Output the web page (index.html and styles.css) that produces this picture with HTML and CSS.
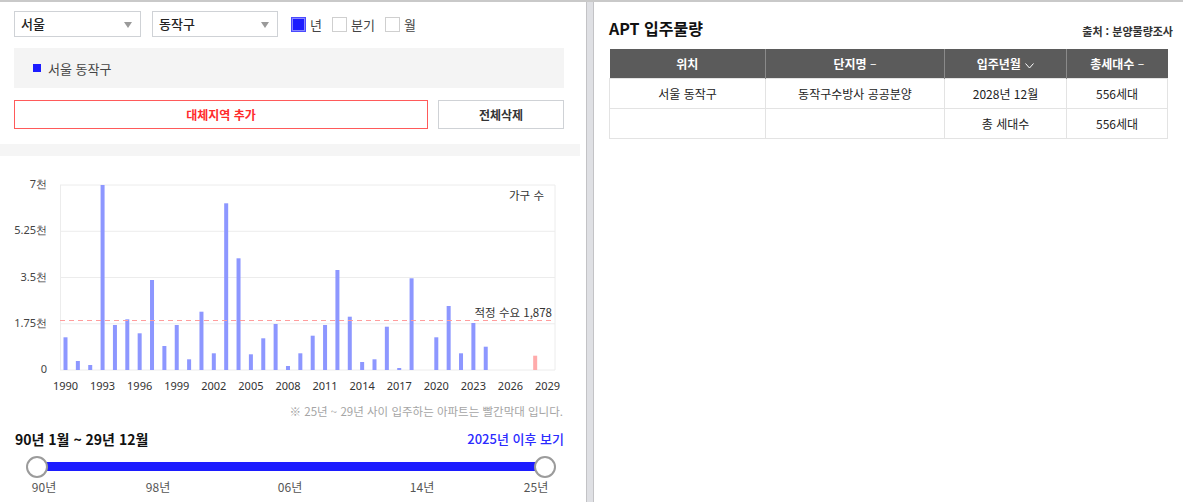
FILE: index.html
```html
<!DOCTYPE html>
<html lang="ko">
<head>
    <meta charset="UTF-8">
    <meta name="viewport" content="width=device-width, initial-scale=1.0">
    <title>APT 입주물량</title>
    <link rel="stylesheet" href="styles.css">
</head>
<body>
    <div class="page">
        <div class="left">
            <div class="filters">
                <div class="filter-row">
                    <div class="select">서울<span class="arrow"></span></div>
                    <div class="select">동작구<span class="arrow"></span></div>
                    <div class="checks">
                        <label class="check"><span class="box on"></span>년</label>
                        <label class="check"><span class="box"></span>분기</label>
                        <label class="check"><span class="box"></span>월</label>
                    </div>
                </div>
                <div class="region-box">
                    <span class="dot"></span>서울 동작구
                </div>
                <div class="buttons">
                    <button class="btn btn-add">대체지역 추가</button>
                    <button class="btn btn-clear">전체삭제</button>
                </div>
            </div>
            <div class="divider"></div>

            <svg class="chart" width="580" height="244" viewBox="0 0 580 244">
                <g class="grid">
                    <line x1="60" y1="29" x2="555" y2="29"/>
                    <line x1="60" y1="75.25" x2="555" y2="75.25"/>
                    <line x1="60" y1="121.5" x2="555" y2="121.5"/>
                    <line x1="60" y1="167.75" x2="555" y2="167.75"/>
                    <line x1="60" y1="214" x2="555" y2="214"/>
                    <line x1="60.5" y1="29" x2="60.5" y2="214"/>
                    <line x1="555" y1="29" x2="555" y2="214"/>
                </g>
                <g class="ylabels">
                    <text x="47" y="32">7천</text>
                    <text x="47" y="78">5.25천</text>
                    <text x="47" y="125">3.5천</text>
                    <text x="47" y="171">1.75천</text>
                    <text x="47" y="217">0</text>
                </g>
                <g class="bars">
                    <rect x="63.5" y="181.3" width="4" height="32.7"/>
                    <rect x="75.86" y="205" width="4" height="9"/>
                    <rect x="88.22" y="209" width="4" height="5"/>
                    <rect x="100.58" y="29" width="4" height="185"/>
                    <rect x="112.94" y="169" width="4" height="45"/>
                    <rect x="125.3" y="163.3" width="4" height="50.7"/>
                    <rect x="137.66" y="177.3" width="4" height="36.7"/>
                    <rect x="150.02" y="124" width="4" height="90"/>
                    <rect x="162.38" y="190" width="4" height="24"/>
                    <rect x="174.74" y="169" width="4" height="45"/>
                    <rect x="187.1" y="203.3" width="4" height="10.7"/>
                    <rect x="199.46" y="155.7" width="4" height="58.3"/>
                    <rect x="211.82" y="197.3" width="4" height="16.7"/>
                    <rect x="224.18" y="47.3" width="4" height="166.7"/>
                    <rect x="236.54" y="102.3" width="4" height="111.7"/>
                    <rect x="248.9" y="198.3" width="4" height="15.7"/>
                    <rect x="261.26" y="182.3" width="4" height="31.7"/>
                    <rect x="273.62" y="168" width="4" height="46"/>
                    <rect x="285.98" y="210" width="4" height="4"/>
                    <rect x="298.34" y="197.3" width="4" height="16.7"/>
                    <rect x="310.7" y="179.7" width="4" height="34.3"/>
                    <rect x="323.06" y="169" width="4" height="45"/>
                    <rect x="335.42" y="114" width="4" height="100"/>
                    <rect x="347.78" y="160.7" width="4" height="53.3"/>
                    <rect x="360.14" y="206" width="4" height="8"/>
                    <rect x="372.5" y="203.3" width="4" height="10.7"/>
                    <rect x="384.86" y="170.7" width="4" height="43.3"/>
                    <rect x="397.22" y="212" width="4" height="2"/>
                    <rect x="409.58" y="122.3" width="4" height="91.7"/>
                    <rect x="434.3" y="181.3" width="4" height="32.7"/>
                    <rect x="446.66" y="150" width="4" height="64"/>
                    <rect x="459.02" y="197.3" width="4" height="16.7"/>
                    <rect x="471.38" y="167" width="4" height="47"/>
                    <rect x="483.74" y="190.7" width="4" height="23.3"/>
                    <rect class="future" x="533.18" y="199.7" width="4" height="14.3"/>
                </g>
                <line class="demand" x1="60" y1="164.5" x2="555" y2="164.5"/>
                <text class="demand-label" x="552" y="160.5">적정 수요 1,878</text>
                <text class="unit" x="544" y="44">가구 수</text>
                <g class="xlabels">
                    <text x="65.5" y="234">1990</text>
                    <text x="102.58" y="234">1993</text>
                    <text x="139.66" y="234">1996</text>
                    <text x="176.74" y="234">1999</text>
                    <text x="213.82" y="234">2002</text>
                    <text x="250.9" y="234">2005</text>
                    <text x="287.98" y="234">2008</text>
                    <text x="325.06" y="234">2011</text>
                    <text x="362.14" y="234">2014</text>
                    <text x="399.22" y="234">2017</text>
                    <text x="436.3" y="234">2020</text>
                    <text x="473.38" y="234">2023</text>
                    <text x="510.46" y="234">2026</text>
                    <text x="547.54" y="234">2029</text>
                </g>
            </svg>

            <p class="note">※ 25년 ~ 29년 사이 입주하는 아파트는 빨간막대 입니다.</p>
            <div class="range-head">
                <strong>90년 1월 ~ 29년 12월</strong>
                <a class="after-link">2025년 이후 보기</a>
            </div>
            <div class="slider">
                <div class="track"></div>
                <span class="handle handle-left"></span>
                <span class="handle handle-right"></span>
            </div>
            <div class="slider-labels">
                <span style="left: 44px">90년</span>
                <span style="left: 158px">98년</span>
                <span style="left: 290px">06년</span>
                <span style="left: 422px">14년</span>
                <span style="left: 536px">25년</span>
            </div>
        </div>

        <div class="right">
            <div class="right-head">
                <h2 class="title">APT 입주물량</h2>
                <span class="source">출처 : 분양물량조사</span>
            </div>
            <table class="supply">
                <colgroup>
                    <col style="width: 156px">
                    <col style="width: 179px">
                    <col style="width: 122px">
                    <col style="width: 101px">
                </colgroup>
                <thead>
                    <tr>
                        <th>위치</th>
                        <th>단지명 <span class="sort">–</span></th>
                        <th>입주년월 <svg class="chev" width="9" height="6" viewBox="0 0 9 6"><path d="M0.5 0.5 L4.5 5 L8.5 0.5" fill="none" stroke="#fff" stroke-width="1"/></svg></th>
                        <th>총세대수 <span class="sort">–</span></th>
                    </tr>
                </thead>
                <tbody>
                    <tr>
                        <td>서울 동작구</td>
                        <td>동작구수방사 공공분양</td>
                        <td>2028년 12월</td>
                        <td>556세대</td>
                    </tr>
                    <tr>
                        <td></td>
                        <td></td>
                        <td>총 세대수</td>
                        <td>556세대</td>
                    </tr>
                </tbody>
            </table>
        </div>
    </div>
</body>
</html>
```

FILE: styles.css
```css
body {
    margin: 0;
    font-family: "Noto Sans CJK KR", "Noto Sans", sans-serif;
    color: #333;
    background: #dfe0e4;
}
.page {
    display: flex;
    height: 500px;
    border-top: 2px solid #c9c9c9;
}
.left {
    width: 580px;
    padding-right: 6px;
    background: #fff;
    border-right: 1px solid #c3c3c6;
}
.filters {
    padding: 9px 16px 15px 14px;
}
.filter-row {
    display: flex;
    align-items: center;
    height: 26px;
}
.select {
    position: relative;
    box-sizing: border-box;
    width: 127px;
    height: 26px;
    margin-right: 11px;
    padding-left: 6px;
    border: 1px solid #cfd2d6;
    font-size: 13px;
    font-weight: 500;
    line-height: 24px;
    color: #222;
}
.select + .select {
    width: 126px;
}
.arrow {
    position: absolute;
    right: 8px;
    top: 10px;
    width: 0;
    height: 0;
    border-left: 4px solid transparent;
    border-right: 4px solid transparent;
    border-top: 6px solid #9a9a9a;
}
.checks {
    display: flex;
    margin-left: 2px;
}
.check {
    display: flex;
    align-items: center;
    margin-right: 10px;
    font-size: 13px;
    color: #444;
}
.box {
    box-sizing: border-box;
    width: 15px;
    height: 15px;
    margin-right: 4px;
    border: 1px solid #cfcfcf;
    background: #fff;
}
.box.on {
    border: 1px solid #4a4aff;
    background: #1c1cff;
    box-shadow: inset 0 0 0 1px #8888ff;
}
.region-box {
    display: flex;
    align-items: center;
    height: 40px;
    margin-top: 11px;
    padding-left: 19px;
    background: #f4f4f4;
    font-size: 13px;
    color: #444;
}
.dot {
    width: 8px;
    height: 8px;
    margin-right: 7px;
    background: #1c1cff;
}
.buttons {
    display: flex;
    justify-content: space-between;
    margin-top: 12px;
}
.btn {
    box-sizing: border-box;
    height: 29px;
    background: #fff;
    font-family: inherit;
    font-size: 12px;
    font-weight: bold;
    cursor: pointer;
}
.btn-add {
    width: 414px;
    border: 1px solid #ff5a5a;
    color: #ff2b2b;
}
.btn-clear {
    width: 126px;
    border: 1px solid #cfd2d6;
    color: #333;
}
.divider {
    height: 12px;
    background: #f5f5f5;
}
.chart {
    display: block;
    font-family: "Noto Sans", sans-serif;
}
.grid line {
    stroke: #ececec;
    stroke-width: 1;
}
.ylabels text {
    font-size: 11px;
    fill: #444;
    text-anchor: end;
}
.xlabels text {
    font-size: 11px;
    fill: #333;
    text-anchor: middle;
}
.bars rect {
    fill: #8d97ff;
}
.bars rect.future {
    fill: #ffabab;
}
.demand {
    stroke: #ff9d9d;
    stroke-width: 1;
    stroke-dasharray: 5 4;
}
.demand-label, .unit {
    font-family: "Noto Sans CJK KR", sans-serif;
    font-size: 11.5px;
    fill: #333;
    text-anchor: end;
}
.note {
    margin: 3px 17px 0 0;
    font-size: 11.5px;
    line-height: 16px;
    color: #a5a5a5;
    text-align: right;
}
.range-head {
    display: flex;
    justify-content: space-between;
    align-items: center;
    margin-top: 10px;
    padding: 0 16px 0 15px;
    line-height: 20px;
}
.range-head strong {
    font-size: 14px;
    color: #111;
}
.after-link {
    font-size: 13px;
    font-weight: 500;
    color: #2b2bff;
}
.slider {
    position: relative;
    width: 530px;
    height: 24px;
    margin: 6px 0 0 26px;
}
.track {
    position: absolute;
    left: 11px;
    right: 11px;
    top: 7px;
    height: 9px;
    background: #1c1cff;
}
.handle {
    position: absolute;
    top: 1px;
    box-sizing: border-box;
    width: 22px;
    height: 22px;
    border: 2px solid #9b9b9b;
    border-radius: 50%;
    background: #fff;
}
.handle-left {
    left: 0;
}
.handle-right {
    right: 0;
}
.slider-labels {
    position: relative;
    height: 16px;
    font-size: 12px;
    line-height: 16px;
    color: #555;
}
.slider-labels span {
    position: absolute;
    top: 0;
    transform: translateX(-50%);
}
.right {
    flex: 1;
    margin-left: 6px;
    padding: 15px 10px 0 15px;
    background: #fff;
    border-left: 1px solid #c3c3c6;
}
.right-head {
    display: flex;
    justify-content: space-between;
    align-items: flex-end;
    width: 564px;
}
.title {
    margin: 0;
    font-size: 16px;
    font-weight: bold;
    line-height: 22px;
    color: #111;
}
.source {
    font-size: 11px;
    font-weight: bold;
    line-height: 16px;
    color: #333;
}
.supply {
    width: 558px;
    margin-top: 10px;
    border-collapse: collapse;
    table-layout: fixed;
    font-size: 12px;
}
.supply th {
    height: 29px;
    padding: 0;
    background: #5b5b5b;
    color: #fff;
    font-weight: bold;
    border-left: 1px solid #8a8a8a;
}
.supply th:first-child {
    border-left: none;
}
.supply td {
    height: 29px;
    padding: 0;
    text-align: center;
    color: #222;
    border: 1px solid #e3e3e3;
}
.sort {
    font-weight: normal;
}
.chev {
    vertical-align: middle;
    margin-left: 1px;
}
```
